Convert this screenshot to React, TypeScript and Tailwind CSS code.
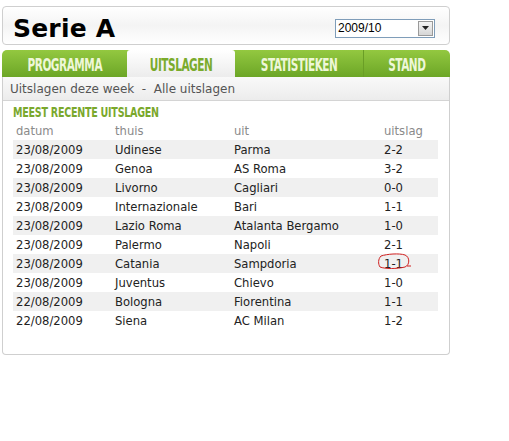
const rows = [
  ["23/08/2009", "Udinese", "Parma", "2-2"],
  ["23/08/2009", "Genoa", "AS Roma", "3-2"],
  ["23/08/2009", "Livorno", "Cagliari", "0-0"],
  ["23/08/2009", "Internazionale", "Bari", "1-1"],
  ["23/08/2009", "Lazio Roma", "Atalanta Bergamo", "1-0"],
  ["23/08/2009", "Palermo", "Napoli", "2-1"],
  ["23/08/2009", "Catania", "Sampdoria", "1-1"],
  ["23/08/2009", "Juventus", "Chievo", "1-0"],
  ["22/08/2009", "Bologna", "Fiorentina", "1-1"],
  ["22/08/2009", "Siena", "AC Milan", "1-2"],
];

const tabFont = { fontFamily: '"Liberation Sans Narrow", "DejaVu Sans Condensed", sans-serif' };

function Tab({ label, width, active, first, sep }: { label: string; width: string; active?: boolean; first?: boolean; sep?: boolean }) {
  return (
    <div
      className={`${width} h-full flex items-center justify-center pt-[3px] font-bold text-[15px] tracking-[-0.6px] ${
        active
          ? "bg-gradient-to-b from-white to-[#ececec] text-[#7aab2c] rounded-t-[3px]"
          : "text-[#eef7d8]"
      } ${first ? "rounded-tl-[5px]" : ""} ${sep ? "border-l border-[#6a9e26]" : ""}`}
      style={tabFont}
    >
      <span className="inline-block scale-x-[0.78] scale-y-[1.15]">{label}</span>
    </div>
  );
}

export default function App() {
  return (
    <div className="w-[509px] h-[441px] bg-white pt-[6px] pl-[2px]" style={{ fontFamily: '"DejaVu Sans", Verdana, sans-serif' }}>
      <div className="w-[448px]">
        <div className="h-[39px] border border-[#cfcfcf] rounded-[4px] bg-gradient-to-b from-white via-[#f4f4f4] to-white flex items-center justify-between pl-[10px] pr-[14px]">
          <span className="text-[25px] font-bold text-black leading-none tracking-[0.2px] mt-[5px]">Serie A</span>
          <div className="w-[100px] h-[19px] border border-[#7f9db9] bg-white flex items-center justify-between pl-[2px] pr-[1px] mt-[5px]">
            <span className="text-[12px] text-black" style={{ fontFamily: '"Liberation Sans", Arial, sans-serif' }}>2009/10</span>
            <div className="w-[15px] h-[15px] bg-gradient-to-b from-[#f4f4f4] to-[#d6d6d6] border border-[#9a9a9a] flex items-center justify-center">
              <svg width="7" height="4" viewBox="0 0 7 4"><path d="M0 0h7L3.5 4z" fill="#222" /></svg>
            </div>
          </div>
        </div>

        <div className="mt-[5px] h-[27px] flex bg-gradient-to-b from-[#93c840] to-[#6ca626] rounded-t-[5px]">
          <Tab label="PROGRAMMA" width="w-[125px]" first />
          <Tab label="UITSLAGEN" width="w-[108px]" active />
          <Tab label="STATISTIEKEN" width="w-[128px]" />
          <Tab label="STAND" width="w-[87px]" sep />
        </div>

        <div className="relative border border-t-0 border-[#cfcfcf] rounded-b-[4px] h-[278px]">
          <div className="h-[24px] bg-gradient-to-b from-[#f9f9f9] to-[#ececec] border-b border-[#d4d4d4] flex items-center pl-[7px] text-[12px] text-[#555]">
            Uitslagen deze week&nbsp; - &nbsp;Alle uitslagen
          </div>
          <div className="px-[10px] pt-[5px]">
            <div className="text-[12.5px] font-bold text-[#7aa82c] leading-[14px] tracking-[-0.3px]" style={tabFont}>
              <span className="inline-block scale-x-[0.85] scale-y-[1.1] origin-left">MEEST RECENTE UITSLAGEN</span>
            </div>
            <div className="mt-[1px] w-[425px] text-[11.6px]">
              <div className="grid grid-cols-[99px_119px_150px_1fr] h-[19px] items-center pl-[3px] pt-[2px] text-[#8a8a8a]">
                <span>datum</span>
                <span>thuis</span>
                <span>uit</span>
                <span>uitslag</span>
              </div>
              {rows.map((r, i) => (
                <div
                  key={i}
                  className={`grid grid-cols-[99px_119px_150px_1fr] h-[19px] items-center pl-[3px] pt-[2px] text-[#222] ${i % 2 === 0 ? "bg-[#f0f0f0]" : ""}`}
                >
                  <span>{r[0]}</span>
                  <span>{r[1]}</span>
                  <span>{r[2]}</span>
                  <span className="relative">
                    {r[3]}
                    {i === 6 && (
                      <svg className="absolute left-[-7px] top-[-3px]" width="38" height="18" viewBox="0 0 38 18" fill="none">
                        <path
                          d="M4 3 C10 1, 22 0, 28 2 C33 4, 33 12, 28 14 C20 16, 8 16, 3 14 C1 11, 1 6, 4 3 M30 13 L34 13"
                          stroke="#d02020"
                          strokeWidth="1"
                        />
                      </svg>
                    )}
                  </span>
                </div>
              ))}
            </div>
          </div>
        </div>
      </div>
    </div>
  );
}
